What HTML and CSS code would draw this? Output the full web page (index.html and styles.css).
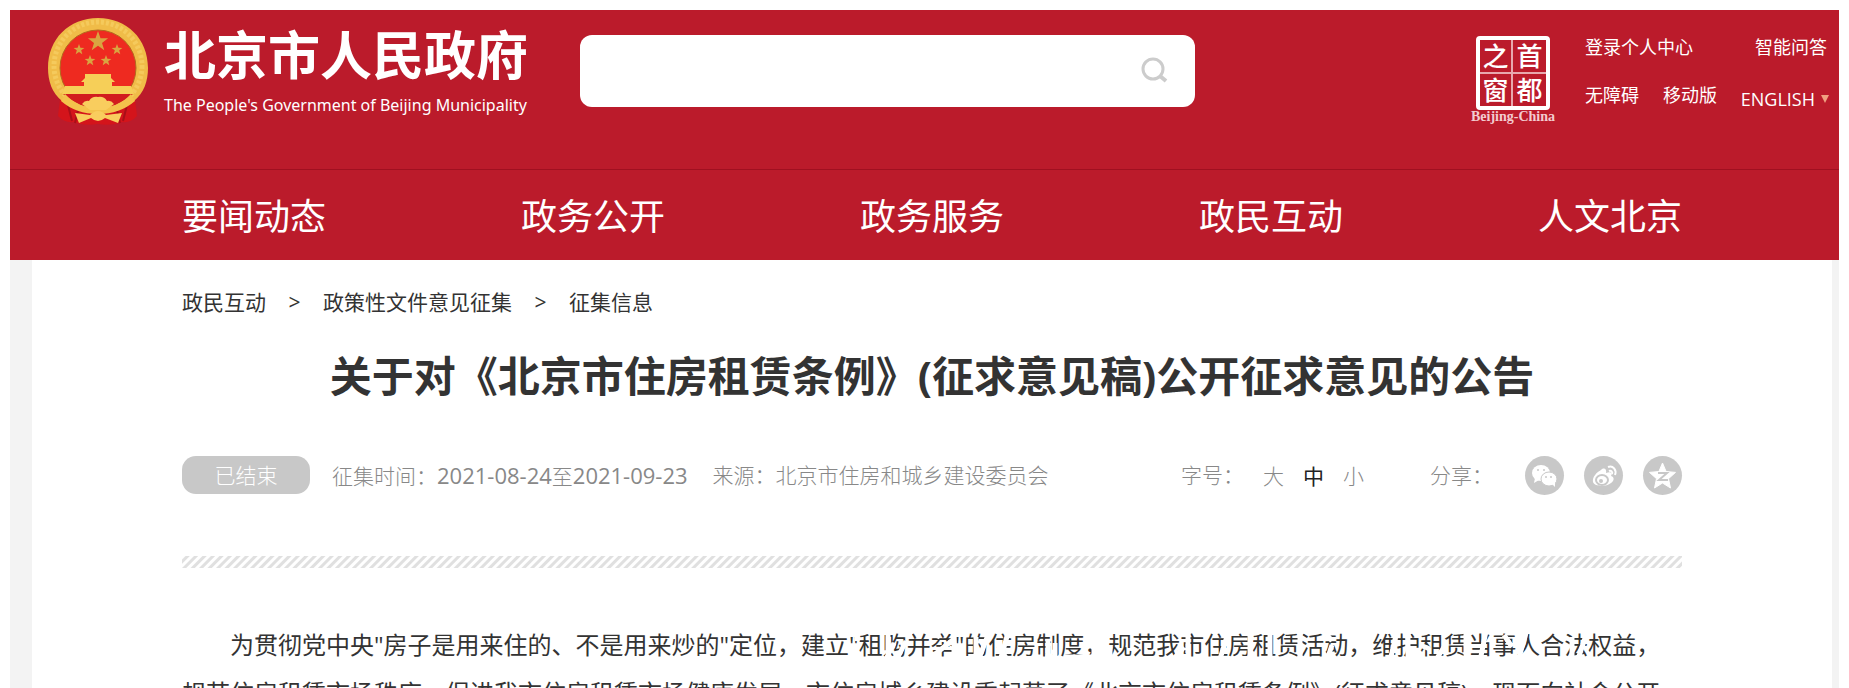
FILE: index.html
```html
<!doctype html>
<html lang="zh-CN">
  <head>
    <meta charset="utf-8">
    <meta name="viewport" content="width=device-width, initial-scale=1">
    <title>北京市人民政府</title>
    <link rel="stylesheet" href="styles.css">
  </head>
  <body>
    <header class="header">
        <div class="header-top">
            <a class="logo" href="#">
                <svg class="emblem" viewBox="0 0 102 108" aria-hidden="true">
                    <path d="M14 74L11 99Q17 106 27 105Q36 109 51 107Q66 109 75 105Q84 106 90 99L87 74L51 90Z" fill="#d4141b"/>
                    <path d="M20 84L25 104M31 93L28 106M81 84L76 104M70 93L73 106" stroke="#a90f18" stroke-width="2"/>
                    <path d="M51 1C80 1 101 22 101 51C101 64 97 76 87 84L84 78C74 92 62 94 51 94C40 94 28 92 18 78L15 84C5 76 1 64 1 51C1 22 22 1 51 1Z" fill="#f0bc48"/>
                    <circle cx="51" cy="49" r="44" fill="none" stroke="#f5ca5c" stroke-width="5" stroke-dasharray="3 2"/>
                    <circle cx="51" cy="51" r="38" fill="#ee2a20" stroke="#b3691e" stroke-width="1"/>
                    <path d="M16 77H86Q70 91 51 91Q32 91 16 77Z" fill="#d21c1e"/>
                    <g fill="#d9a441">
                        <path d="M51 14l2.500 7.200 7.600.1-6.100 4.600 2.300 7.300L51 28.800l-6.300 4.400 2.300-7.300-6.100-4.600 7.600-.1z"/>
                        <path d="M32 27l1.400 3.800 4 .1-3.200 2.400 1.100 3.900-3.300-2.300-3.300 2.300 1.100-3.900-3.200-2.400 4-.1z"/>
                        <path d="M70 27l1.400 3.800 4 .1-3.200 2.400 1.100 3.900-3.300-2.300-3.300 2.300 1.100-3.900-3.200-2.400 4-.1z"/>
                        <path d="M43 38l1.400 3.800 4 .1-3.200 2.400 1.100 3.900-3.300-2.300-3.300 2.300 1.100-3.900-3.200-2.400 4-.1z"/>
                        <path d="M59 38l1.400 3.800 4 .1-3.200 2.400 1.100 3.900-3.300-2.300-3.300 2.300 1.100-3.900-3.200-2.400 4-.1z"/>
                    </g>
                    <path d="M38 57H64V61L68 65H34L38 61ZM37 65H65V69H84L87 77H15L18 69H37Z" fill="#f6cf58"/>
                    <path d="M18 77Q31 91 51 92Q71 91 84 77L88 84Q73 97 51 97Q29 97 14 84Z" fill="#f4c24c"/>
                    <path d="M35 87Q38 83 42 84Q45 79 51 80Q57 79 60 84Q64 83 67 87L59 93H43Z" fill="#f9cd5e"/>
                    <path d="M28 96L43 98Q51 90 59 98L75 96L71 106L58 101Q51 107 44 101L32 106Z" fill="#f9cd5e"/>
                </svg>
                <span class="logo-text">
                    <span class="logo-cn">北京市人民政府</span>
                    <span class="logo-en">The People's Government of Beijing Municipality</span>
                </span>
            </a>
            <form class="search">
                <input type="text" name="q" aria-label="搜索">
                <button type="submit" aria-label="搜索">
                    <svg width="28" height="28" viewBox="0 0 28 28" fill="none" stroke="#ccc" stroke-width="3"><circle cx="12" cy="12" r="10"/><path d="M19 19l6 5" stroke-width="4"/></svg>
                </button>
            </form>
            <a class="window-logo" href="#">
                <span class="seal"><span>之</span><span>首</span><span>窗</span><span>都</span></span>
                <span class="seal-name">Beijing-China</span>
            </a>
            <div class="top-links">
                <div class="link-row">
                    <a href="#">登录个人中心</a>
                    <a href="#">智能问答</a>
                </div>
                <div class="link-row">
                    <a href="#">无障碍</a>
                    <a href="#">移动版</a>
                    <a class="english" href="#">ENGLISH <i class="arrow"></i></a>
                </div>
            </div>
        </div>
        <nav class="nav">
            <a href="#">要闻动态</a>
            <a href="#">政务公开</a>
            <a href="#">政务服务</a>
            <a href="#">政民互动</a>
            <a href="#">人文北京</a>
        </nav>
    </header>
    <div class="page">
        <main class="content">
            <div class="crumbs">
                <a href="#">政民互动</a><span>&gt;</span><a href="#">政策性文件意见征集</a><span>&gt;</span><a href="#">征集信息</a>
            </div>
            <h1>关于对《北京市住房租赁条例》(征求意见稿)公开征求意见的公告</h1>
            <div class="meta">
                <span class="status">已结束</span>
                <span class="date">征集时间：<time>2021-08-24</time>至<time>2021-09-23</time></span>
                <span class="source">来源：北京市住房和城乡建设委员会</span>
                <div class="font-size">
                    <span class="tool-label">字号：</span>
                    <button type="button">大</button>
                    <button type="button" class="active">中</button>
                    <button type="button">小</button>
                </div>
                <div class="share">
                    <span class="tool-label">分享：</span>
                    <a href="#" aria-label="微信">
                        <svg viewBox="0 0 39 39"><ellipse cx="16" cy="17" rx="9" ry="8" fill="#fff"/><path d="M10 22l-1 5 5-3z" fill="#fff"/><ellipse cx="24" cy="23" rx="8" ry="7" fill="#fff" stroke="#c8c8c8"/><path d="M27 28l3 3v-5z" fill="#fff"/><g fill="#c8c8c8"><circle cx="13" cy="14" r="1"/><circle cx="19" cy="14" r="1"/><circle cx="21" cy="21" r="1"/><circle cx="26" cy="21" r="1"/></g></svg>
                    </a>
                    <a href="#" aria-label="微博">
                        <svg viewBox="0 0 39 39" fill="none"><path d="M17 14c3-3 6-1 5 3 5-2 7 0 5 3 4 1 3 5 0 7-5 4-16 4-18-1-1-5 4-10 8-12z" fill="#fff"/><ellipse cx="18" cy="24" rx="6" ry="5" stroke="#c8c8c8" stroke-width="2"/><circle cx="17" cy="25" r="2" fill="#c8c8c8"/><path d="M24 11c5-2 9 3 7 8M25 15c2-1 4 1 3 3" stroke="#fff" stroke-width="2"/></svg>
                    </a>
                    <a href="#" aria-label="QQ空间">
                        <svg viewBox="0 0 39 39"><path d="M19.500 7l3.600 8.500 9.400.9-7 6.300 2 9.300-8-5-8 5 2-9.300-7-6.300 9.400-.9z" fill="#fff" stroke="#fff" stroke-linejoin="round"/><path d="M15 17h9l-8 7h9" fill="none" stroke="#c8c8c8" stroke-width="2"/></svg>
                    </a>
                </div>
            </div>
            <div class="stripes"></div>
            <article class="article">
                <p>为贯彻党中央"房子是用来住的、不是用来炒的"定位，建立"租购并举"的住房制度，规范我市住房租赁活动，维护租赁当事人合法权益，规范住房租赁市场秩序，促进我市住房租赁市场健康发展，市住房城乡建设委起草了《北京市住房租赁条例》(征求意见稿)，现面向社会公开征求意见。</p>
                <!-- white marks over the first line -->
                <svg class="marks" viewBox="0 0 1500 48" preserveAspectRatio="none" aria-hidden="true">
                    <path d="M675 8v12M706 10v30M712 22l-8 16M718 12h12M724 20l-10 20M744 10l14 6M752 34l20-16M772 10v32M794 16v26M806 14l-10 26M816 24l10 16M826 12l-8 28M866 18v24M873 22v20M878 10h44M882 36h38M912 14v26M928 26v16M1002 26l-12 14M1006 12v20M1046 12l-8 26M1068 14v28M1088 14v26M1118 12v28M1142 10l8 10M1150 24l-6 18M1186 12l-6 28M1214 14l-6 26M1226 10v32M1238 24l10 4M1262 26l-10 16M1284 12v28M1304 10l-6 30M1322 14l8 12M1344 12l-8 28M1390 16v24M1404 14l-8 24"/>
                </svg>
            </article>
        </main>
    </div>
  </body>
</html>
```
FILE: styles.css
```css
*{
    box-sizing: border-box;
}
body{
    margin:10px 10px 0;
    font-family: "Open Sans","Noto Sans CJK SC",sans-serif;
    background:#fff;
    color:#333;
    overflow: hidden;
}
a{
    color:inherit;
    text-decoration: none;
}
button{
    font-family: inherit;
    border:none;
    background:none;
    padding:0;
    cursor: pointer;
}
.header{
    background:#bb1b2b;
    color:#fff;
}
.header-top{
    display:flex;
    align-items: flex-start;
    height:160px;
    padding:0 10px 0 37px;
    border-bottom:1px solid #a01020;
}
.logo{
    display:flex;
    gap:15px;
    padding-top:7px;
    width:533px;
}
.emblem{
    width:102px;
    height:108px;
    flex:none;
}
.logo-text{
    display:flex;
    flex-direction: column;
    white-space: nowrap;
}
.logo-cn{
    font-size:52px;
    line-height:76px;
    font-weight:700;
}
.logo-en{
    font-family: "Noto Sans",sans-serif;
    font-size:16px;
    line-height:24px;
}
.search{
    display:flex;
    align-items: center;
    width:615px;
    height:72px;
    margin-top:25px;
    padding-right:26px;
    background:#fff;
    border-radius:12px;
}
.search input{
    flex:1;
    height:100%;
    border:none;
    background:none;
    padding:0 20px;
    font-size:21px;
    outline:none;
}
.search button{
    height:28px;
}
.window-logo{
    display:flex;
    flex-direction: column;
    align-items: center;
    margin:26px 30px 0 auto;
}
.seal{
    display:grid;
    grid-template-columns: 1fr 1fr;
    width:74px;
    height:74px;
    border:4px solid #fff;
    border-radius:4px;
    font-size:26px;
    line-height:32px;
    font-weight:500;
    text-align: center;
}
.seal span:nth-child(odd){
    border-right:2px solid #e8a8ae;
}
.seal span:nth-child(-n+2){
    border-bottom:2px solid #e8a8ae;
}
.seal-name{
    font-family: "Liberation Serif",serif;
    font-size:14px;
    line-height:14px;
    font-weight:700;
    color:#f3ccd0;
}
.top-links{
    width:244px;
    padding-top:23px;
    font-size:18px;
    line-height:28px;
}
.link-row{
    display:flex;
    justify-content: space-between;
    margin-bottom:20px;
}
.link-row:first-child{
    padding-right:2px;
}
.english{
    display:flex;
    align-items: center;
    gap:6px;
    padding-top:4px;
}
.arrow{
    border:4px solid transparent;
    border-top:8px solid #f0a080;
    border-bottom:none;
}
.nav{
    display:flex;
    justify-content: space-between;
    height:90px;
    padding:0 157px 0 172px;
    font-size:36px;
    line-height:94px;
}
.page{
    background:#f3f3f3;
    padding:0 7px 0 22px;
}
.content{
    background:#fff;
    padding:24px 150px 40px;
}
.crumbs{
    display:flex;
    font-size:21px;
    line-height:36px;
}
.crumbs span{
    width:57px;
    text-align: center;
}
h1{
    margin:26px 0 49px;
    font-size:42px;
    line-height:60px;
    text-align: center;
}
.meta{
    display:flex;
    align-items: center;
    height:40px;
    font-size:21px;
    font-weight:300;
    line-height:38px;
    color:#888;
    white-space: nowrap;
}
.status{
    width:128px;
    border-radius:14px;
    background:#c8c8c8;
    color:#fff;
    text-align: center;
    margin-right:22px;
}
.date{
    margin-right:25px;
}
.date time{
    font-size:22px;
    font-weight:400;
}
.font-size,.share{
    display:flex;
    align-items: center;
}
.font-size{
    margin-left:auto;
    margin-right:66px;
    gap:19px;
}
.font-size button{
    font-size:21px;
    font-weight:300;
    color:#888;
}
.font-size .active{
    color:#222;
    font-weight:400;
}
.share{
    gap:20px;
}
.share a,.share svg{
    display:block;
    width:39px;
    height:39px;
}
.share a{
    border-radius:50%;
    background:#c8c8c8;
}
.share .tool-label{
    margin-right:12px;
}
.stripes{
    height:12px;
    margin-top:61px;
    background:repeating-linear-gradient(135deg,#fff 0,#fff 2px,#e0e0e0 3px,#e0e0e0 5px,#fff 6px);
}
.article{
    position: relative;
    padding-top:53px;
}
.article p{
    margin:0;
    font-size:24px;
    line-height:48px;
    text-indent:2em;
}
.marks{
    position: absolute;
    top:53px;
    left:0;
    width:100%;
    height:48px;
    fill:none;
    stroke:#fff;
    stroke-width:5;
    pointer-events: none;
}
```
